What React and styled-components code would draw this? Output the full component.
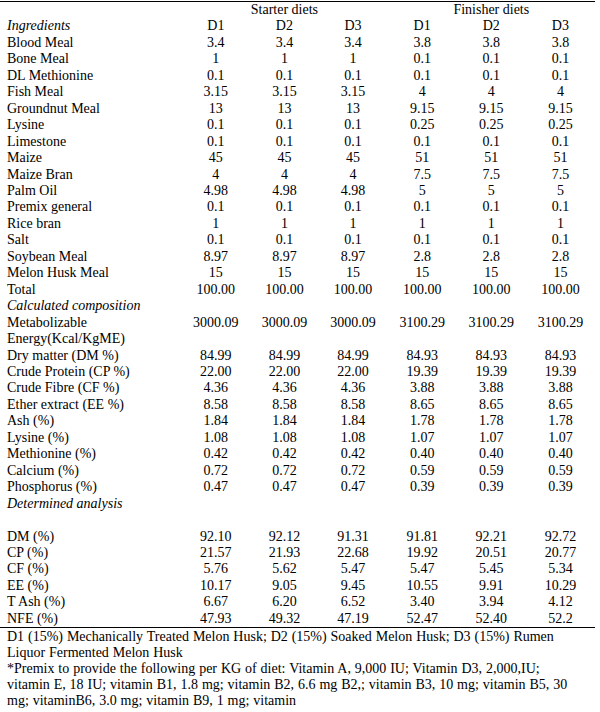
import React from "react";
import styled, { createGlobalStyle } from "styled-components";

const GlobalStyle = createGlobalStyle`
  html, body {
    margin: 0;
    padding: 0;
    background: #fff;
  }
  body {
    font-family: "Liberation Serif", "Times New Roman", serif;
    font-size: 14px;
    line-height: 16.45px;
    color: #000;
  }
`;

const ingredients = [
  ["Blood Meal", "3.4", "3.4", "3.4", "3.8", "3.8", "3.8"],
  ["Bone Meal", "1", "1", "1", "0.1", "0.1", "0.1"],
  ["DL Methionine", "0.1", "0.1", "0.1", "0.1", "0.1", "0.1"],
  ["Fish Meal", "3.15", "3.15", "3.15", "4", "4", "4"],
  ["Groundnut Meal", "13", "13", "13", "9.15", "9.15", "9.15"],
  ["Lysine", "0.1", "0.1", "0.1", "0.25", "0.25", "0.25"],
  ["Limestone", "0.1", "0.1", "0.1", "0.1", "0.1", "0.1"],
  ["Maize", "45", "45", "45", "51", "51", "51"],
  ["Maize Bran", "4", "4", "4", "7.5", "7.5", "7.5"],
  ["Palm Oil", "4.98", "4.98", "4.98", "5", "5", "5"],
  ["Premix general", "0.1", "0.1", "0.1", "0.1", "0.1", "0.1"],
  ["Rice bran", "1", "1", "1", "1", "1", "1"],
  ["Salt", "0.1", "0.1", "0.1", "0.1", "0.1", "0.1"],
  ["Soybean Meal", "8.97", "8.97", "8.97", "2.8", "2.8", "2.8"],
  ["Melon Husk Meal", "15", "15", "15", "15", "15", "15"],
  ["Total", "100.00", "100.00", "100.00", "100.00", "100.00", "100.00"],
];

const calculated = [
  [
    "Metabolizable Energy(Kcal/KgME)",
    "3000.09",
    "3000.09",
    "3000.09",
    "3100.29",
    "3100.29",
    "3100.29",
  ],
  ["Dry matter (DM %)", "84.99", "84.99", "84.99", "84.93", "84.93", "84.93"],
  ["Crude Protein (CP %)", "22.00", "22.00", "22.00", "19.39", "19.39", "19.39"],
  ["Crude Fibre (CF %)", "4.36", "4.36", "4.36", "3.88", "3.88", "3.88"],
  ["Ether extract (EE %)", "8.58", "8.58", "8.58", "8.65", "8.65", "8.65"],
  ["Ash (%)", "1.84", "1.84", "1.84", "1.78", "1.78", "1.78"],
  ["Lysine (%)", "1.08", "1.08", "1.08", "1.07", "1.07", "1.07"],
  ["Methionine (%)", "0.42", "0.42", "0.42", "0.40", "0.40", "0.40"],
  ["Calcium (%)", "0.72", "0.72", "0.72", "0.59", "0.59", "0.59"],
  ["Phosphorus (%)", "0.47", "0.47", "0.47", "0.39", "0.39", "0.39"],
];

const determined = [
  ["DM (%)", "92.10", "92.12", "91.31", "91.81", "92.21", "92.72"],
  ["CP (%)", "21.57", "21.93", "22.68", "19.92", "20.51", "20.77"],
  ["CF (%)", "5.76", "5.62", "5.47", "5.47", "5.45", "5.34"],
  ["EE (%)", "10.17", "9.05", "9.45", "10.55", "9.91", "10.29"],
  ["T Ash (%)", "6.67", "6.20", "6.52", "3.40", "3.94", "4.12"],
  ["NFE (%)", "47.93", "49.32", "47.19", "52.47", "52.40", "52.2"],
];

function DataRows({ rows }) {
  return rows.map(([label, ...values]) => (
    <tr key={label}>
      <Label>{label}</Label>
      {values.map((v, i) => (
        <Value key={i}>{v}</Value>
      ))}
    </tr>
  ));
}

function Section({ title }) {
  return (
    <tr>
      <Label $italic colSpan={7}>
        {title}
      </Label>
    </tr>
  );
}

export default function App() {
  return (
    <Page>
      <GlobalStyle />
      <Table>
        <colgroup>
          <Col $w={181} />
          <Col $w={69} />
          <Col $w={68} />
          <Col $w={69} />
          <Col $w={69} />
          <Col $w={69} />
          <Col $w={69} />
        </colgroup>
        <tbody>
          <tr>
            <Label />
            <Value colSpan={3}>Starter diets</Value>
            <Value colSpan={3}>Finisher diets</Value>
          </tr>
          <tr>
            <Label $italic>Ingredients</Label>
            {["D1", "D2", "D3", "D1", "D2", "D3"].map((d, i) => (
              <Value key={i}>{d}</Value>
            ))}
          </tr>
          <DataRows rows={ingredients} />
          <Section title="Calculated composition" />
          <DataRows rows={calculated} />
          <Section title="Determined analysis" />
          <tr>
            <Label colSpan={7}>&nbsp;</Label>
          </tr>
          <DataRows rows={determined} />
        </tbody>
      </Table>
      <Notes>
        <p>
          D1 (15%) Mechanically Treated Melon Husk; D2 (15%) Soaked Melon Husk;
          D3 (15%) Rumen Liquor Fermented Melon Husk
        </p>
        <p>
          *Premix to provide the following per KG of diet: Vitamin A, 9,000 IU;
          Vitamin D3, 2,000,IU; vitamin E, 18 IU; vitamin B1, 1.8 mg; vitamin
          B2, 6.6 mg B2,; vitamin B3, 10 mg; vitamin B5, 30 mg; vitaminB6, 3.0
          mg; vitamin B9, 1 mg; vitamin
        </p>
      </Notes>
    </Page>
  );
}

const Page = styled.div`
  width: 595px;
  padding-top: 1px;
`;

const Table = styled.table`
  width: 595px;
  table-layout: fixed;
  border-collapse: collapse;
  border-top: 1px solid #000;
  border-bottom: 1px solid #000;
`;

const Col = styled.col`
  width: ${(p) => p.$w}px;
`;

const Label = styled.td`
  padding: 0 7px;
  text-align: left;
  vertical-align: top;
  font-style: ${(p) => (p.$italic ? "italic" : "normal")};
`;

const Value = styled.td`
  padding: 0 4px;
  text-align: center;
  vertical-align: top;
  white-space: nowrap;
`;

const Notes = styled.div`
  padding: 1px 13px 0 7px;
  line-height: 15.9px;
  word-spacing: 0.4px;
  p {
    margin: 0;
  }
`;
